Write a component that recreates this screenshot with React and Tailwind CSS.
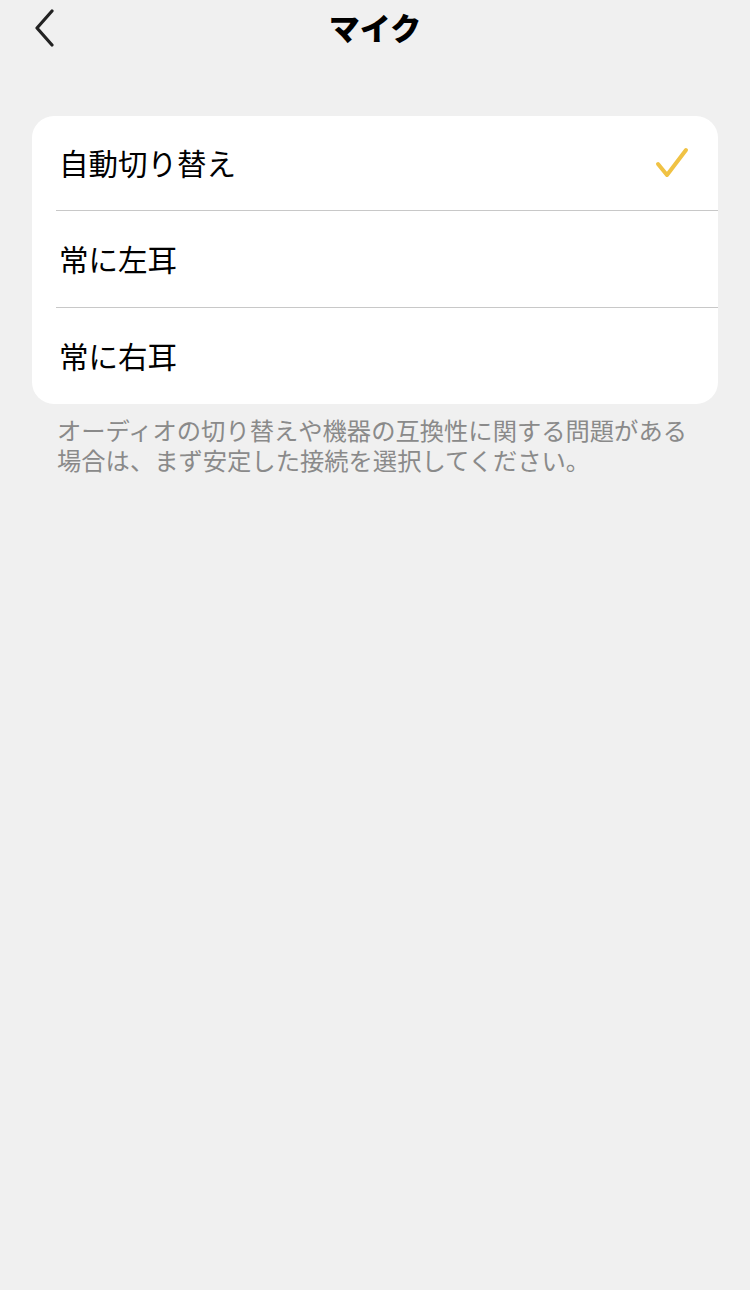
export default function App() {
  const font = { fontFamily: '"Noto Sans CJK JP", "Noto Sans", sans-serif' };
  const rows = ["自動切り替え", "常に左耳", "常に右耳"];
  return (
    <div className="w-[750px] h-[1290px] bg-[#f0f0f0] flex flex-col" style={font}>
      <div className="relative h-[56px] flex items-center justify-center">
        <svg className="absolute left-[33px] top-[9px]" width="24" height="38" viewBox="0 0 24 38" fill="none">
          <path d="M19 2 L4 19 L19 36" stroke="#222" strokeWidth="3.2" strokeLinecap="round" strokeLinejoin="round" />
        </svg>
        <div className="text-[31px] font-black text-black leading-none -mt-[3px]">マイク</div>
      </div>
      <div className="mt-[60px] mx-[32px] bg-white rounded-[22px] overflow-hidden">
        {rows.map((r, i) => (
          <div key={r}>
            {i > 0 && <div className="ml-[24px] h-px bg-[#c8c8c8]" />}
            <div className={`flex items-center justify-between pl-[27px] pr-[28px] ${i === 0 ? "h-[94px]" : "h-[96px]"}`}>
              <span className="text-[29.5px] text-black leading-none">{r}</span>
              {i === 0 && (
                <svg width="36" height="34" viewBox="0 0 36 34" fill="none">
                  <path d="M4 18 L13 29 L32 4" stroke="#f0c244" strokeWidth="4" strokeLinecap="round" strokeLinejoin="round" />
                </svg>
              )}
            </div>
          </div>
        ))}
      </div>
      <p className="ml-[57px] mr-[40px] mt-[11px] text-[24.3px] leading-[30px] text-[#8a8a8a]">
        オーディオの切り替えや機器の互換性に関する問題がある場合は、まず安定した接続を選択してください。
      </p>
    </div>
  );
}
